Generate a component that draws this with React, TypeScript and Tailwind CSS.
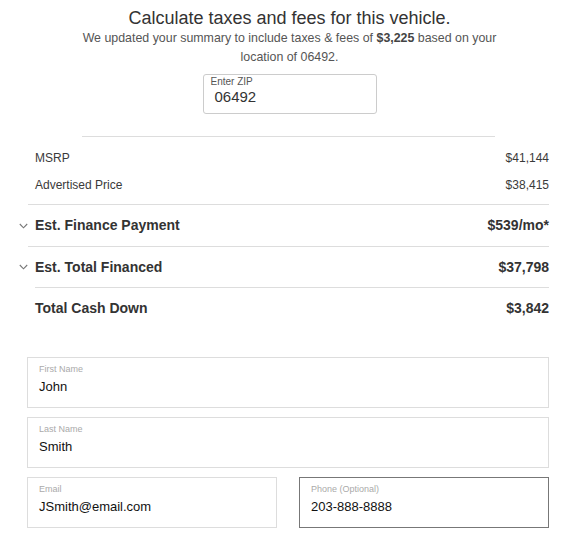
import React from 'react';

interface Row {
  label: string;
  value: string;
}

const priceRows: Row[] = [
  { label: 'MSRP', value: '$41,144' },
  { label: 'Advertised Price', value: '$38,415' },
];

function Chevron() {
  return (
    <svg width="9" height="6" viewBox="0 0 9 6" fill="none" stroke="#777" strokeWidth="1.1" className="shrink-0">
      <polyline points="0.8 1 4.5 4.8 8.2 1" />
    </svg>
  );
}

function Field({ label, value, active }: { label: string; value: string; active?: boolean }) {
  return (
    <div className={`h-[51px] border bg-white pl-[11px] pt-[6px] ${active ? 'border-[#777]' : 'border-[#ddd]'}`}>
      <div className="text-[9px] leading-[11px] text-[#aaa]">{label}</div>
      <div className="mt-[4px] text-[13px] leading-[16px] text-[#111]">{value}</div>
    </div>
  );
}

export default function App() {
  return (
    <div className="w-[579px] min-h-[537px] bg-white font-['Liberation_Sans','Helvetica',sans-serif] text-[#333]">
      {/* Header */}
      <div className="pt-[7px] text-center">
        <h1 className="text-[18px] leading-[22px] text-[#333]">Calculate taxes and fees for this vehicle.</h1>
        <p className="mx-auto w-[420px] text-[12.4px] leading-[19px] text-[#555]">
          We updated your summary to include taxes &amp; fees of <b className="text-[#444]">$3,225</b> based on your location of 06492.
        </p>
        <div className="mx-auto mt-[7px] h-[40px] w-[174px] rounded-[3px] border border-[#ccc] pl-[7px] pt-[1px] text-left">
          <div className="text-[10px] leading-[12px] text-[#555]">Enter ZIP</div>
          <div className="pl-[4px] text-[15px] leading-[18px] text-[#333]">06492</div>
        </div>
      </div>

      <div className="mx-[82px] mt-[22px] h-px w-[413px] bg-[#ddd]" />

      {/* Summary */}
      <div className="pt-[7px]">
        {priceRows.map((row) => (
          <div key={row.label} className="flex h-[27px] items-center justify-between pl-[35px] pr-[30px] text-[12px] text-[#3a3a3a]">
            <span>{row.label}</span>
            <span>{row.value}</span>
          </div>
        ))}
      </div>
      <div className="ml-[28px] mr-[30px] mt-[6px] h-px bg-[#ddd]" />
      <div className="flex h-[41px] items-center justify-between pl-[19px] pr-[30px] text-[14px] font-bold">
        <span className="flex items-center gap-[7px]">
          <Chevron />
          Est. Finance Payment
        </span>
        <span>$539/mo*</span>
      </div>
      <div className="ml-[28px] mr-[30px] h-px bg-[#ddd]" />
      <div className="flex h-[40px] items-center justify-between pl-[19px] pr-[30px] text-[14px] font-bold">
        <span className="flex items-center gap-[7px]">
          <Chevron />
          Est. Total Financed
        </span>
        <span>$37,798</span>
      </div>
      <div className="ml-[35px] mr-[30px] h-px bg-[#ddd]" />
      <div className="flex h-[41px] items-center justify-between pl-[35px] pr-[30px] text-[14px] font-bold">
        <span>Total Cash Down</span>
        <span>$3,842</span>
      </div>

      {/* Contact form */}
      <div className="ml-[27px] mr-[30px] mt-[28px] flex flex-col gap-[9px]">
        <Field label="First Name" value="John" />
        <Field label="Last Name" value="Smith" />
        <div className="grid grid-cols-2 gap-[22px]">
          <Field label="Email" value="JSmith@email.com" />
          <Field label="Phone (Optional)" value="203-888-8888" active />
        </div>
      </div>
    </div>
  );
}
